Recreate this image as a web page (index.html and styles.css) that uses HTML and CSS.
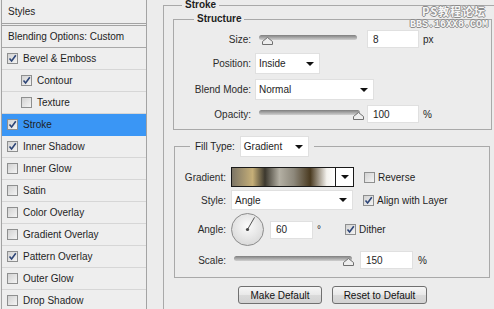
FILE: index.html
```html
<!DOCTYPE html>
<html lang="en">
<head>
    <meta charset="UTF-8">
    <meta name="viewport" content="width=device-width, initial-scale=1.0">
    <title>Layer Style - Stroke</title>
    <link rel="stylesheet" href="styles.css">
</head>
<body>
    <div class="dialog">
        <aside class="styles-panel">
            <div class="panel-head">Styles</div>
            <div class="panel-row">Blending Options: Custom</div>
            <div class="style-item"><span class="check on"><svg viewBox="0 0 9 9"><path d="M1.5 4.5 L3.6 7 L7.8 1.2"/></svg></span>Bevel &amp; Emboss</div>
            <div class="style-item sub"><span class="check on"><svg viewBox="0 0 9 9"><path d="M1.5 4.5 L3.6 7 L7.8 1.2"/></svg></span>Contour</div>
            <div class="style-item sub"><span class="check"></span>Texture</div>
            <div class="style-item selected"><span class="check on"><svg viewBox="0 0 9 9"><path d="M1.5 4.5 L3.6 7 L7.8 1.2"/></svg></span>Stroke</div>
            <div class="style-item"><span class="check on"><svg viewBox="0 0 9 9"><path d="M1.5 4.5 L3.6 7 L7.8 1.2"/></svg></span>Inner Shadow</div>
            <div class="style-item"><span class="check"></span>Inner Glow</div>
            <div class="style-item"><span class="check"></span>Satin</div>
            <div class="style-item"><span class="check"></span>Color Overlay</div>
            <div class="style-item"><span class="check"></span>Gradient Overlay</div>
            <div class="style-item"><span class="check on"><svg viewBox="0 0 9 9"><path d="M1.5 4.5 L3.6 7 L7.8 1.2"/></svg></span>Pattern Overlay</div>
            <div class="style-item"><span class="check"></span>Outer Glow</div>
            <div class="style-item"><span class="check"></span>Drop Shadow</div>
        </aside>

        <fieldset class="stroke-group">
            <legend class="group-title">Stroke</legend>

            <fieldset class="structure">
                <legend class="sub-title">Structure</legend>

                <div class="field-row short">
                    <span class="field-label">Size:</span>
                    <div class="slider size-slider">
                        <div class="track"></div>
                        <svg class="thumb" style="left: 3px" viewBox="0 0 11 8"><path d="M5.5 0.5 L10.5 4.5 L10.5 7.5 L0.5 7.5 L0.5 4.5 Z"/></svg>
                    </div>
                    <span class="num-input size-input">8</span>
                    <span class="unit">px</span>
                </div>

                <div class="field-row">
                    <span class="field-label">Position:</span>
                    <div class="select position-select">Inside<span class="caret"></span></div>
                </div>

                <div class="field-row">
                    <span class="field-label">Blend Mode:</span>
                    <div class="select blend-select">Normal<span class="caret"></span></div>
                </div>

                <div class="field-row short">
                    <span class="field-label">Opacity:</span>
                    <div class="slider opacity-slider">
                        <div class="track"></div>
                        <svg class="thumb" style="left: 94px" viewBox="0 0 11 8"><path d="M5.5 0.5 L10.5 4.5 L10.5 7.5 L0.5 7.5 L0.5 4.5 Z"/></svg>
                    </div>
                    <span class="num-input opacity-input">100</span>
                    <span class="unit">%</span>
                </div>
            </fieldset>

            <fieldset class="fill">
                <legend class="fill-legend">
                    <span>Fill Type:</span>
                    <div class="select fill-select">Gradient<span class="caret"></span></div>
                </legend>

                <div class="fill-row gradient-row">
                    <span class="fill-label">Gradient:</span>
                    <div class="gradient-swatch">
                        <div class="gradient-fill"></div>
                        <div class="gradient-drop"><span class="caret"></span></div>
                    </div>
                    <span class="check"></span>
                    <span class="check-text">Reverse</span>
                </div>

                <div class="fill-row style-row">
                    <span class="fill-label">Style:</span>
                    <div class="select style-select">Angle<span class="caret"></span></div>
                    <span class="check on"><svg viewBox="0 0 9 9"><path d="M1.5 4.5 L3.6 7 L7.8 1.2"/></svg></span>
                    <span class="check-text">Align with Layer</span>
                </div>

                <div class="fill-row angle-row">
                    <span class="fill-label">Angle:</span>
                    <svg class="dial" viewBox="0 0 33 33">
                        <defs>
                            <radialGradient id="dialFace" cx="50%" cy="40%" r="60%">
                                <stop offset="0%" stop-color="#fbfbfb"/>
                                <stop offset="100%" stop-color="#d9d9d9"/>
                            </radialGradient>
                        </defs>
                        <circle cx="16.5" cy="16.5" r="16" fill="url(#dialFace)" stroke="#8c8c8c"/>
                        <line x1="16.5" y1="16.5" x2="23.5" y2="4.4" stroke="#555" stroke-width="1"/>
                        <circle cx="16.5" cy="16.5" r="1.6" fill="#444"/>
                    </svg>
                    <span class="num-input angle-input">60</span>
                    <span class="unit">°</span>
                    <span class="check on dither-check"><svg viewBox="0 0 9 9"><path d="M1.5 4.5 L3.6 7 L7.8 1.2"/></svg></span>
                    <span class="check-text">Dither</span>
                </div>

                <div class="fill-row scale-row">
                    <span class="fill-label">Scale:</span>
                    <div class="slider scale-slider">
                        <div class="track"></div>
                        <svg class="thumb" style="left: 109px" viewBox="0 0 11 8"><path d="M5.5 0.5 L10.5 4.5 L10.5 7.5 L0.5 7.5 L0.5 4.5 Z"/></svg>
                    </div>
                    <span class="num-input scale-input">150</span>
                    <span class="unit">%</span>
                </div>
            </fieldset>

            <div class="buttons">
                <button class="make-default">Make Default</button>
                <button class="reset-default">Reset to Default</button>
            </div>
        </fieldset>
    </div>

    <div class="watermark">
        <div class="wm-cn">PS教程论坛</div>
        <div class="wm-en">BBS.16XX8.COM</div>
    </div>
</body>
</html>
```

FILE: styles.css
```css
* {
    margin: 0;
    padding: 0;
    box-sizing: border-box;
}

body {
    width: 494px;
    height: 309px;
    overflow: hidden;
    font-family: "Liberation Sans", Arial, sans-serif;
    font-size: 10px;
    color: #1e1e1e;
    background-color: #ececec;
}

.dialog {
    display: flex;
    align-items: flex-start;
}

/* left list */

.styles-panel {
    flex: none;
    width: 146px;
    height: 309px;
    margin-left: 1px;
    border-left: 1px solid #a3a3a3;
    border-right: 1px solid #a3a3a3;
    background-color: #eeeeee;
}

.panel-head {
    height: 26px;
    line-height: 23px;
    padding-left: 6px;
    border-bottom: 3px double #a3a3a3;
}

.panel-row {
    height: 22px;
    line-height: 21px;
    padding-left: 6px;
    border-bottom: 1px solid #a8a8a8;
}

.style-item {
    display: flex;
    align-items: center;
    gap: 5px;
    height: 22px;
    padding-left: 5px;
    border-bottom: 1px solid #d6d6d6;
}

.style-item.sub {
    padding-left: 19px;
}

.style-item.selected {
    background-color: #3a96f5;
    border-bottom-color: #3a96f5;
}

.check {
    flex: none;
    display: flex;
    align-items: center;
    justify-content: center;
    width: 11px;
    height: 11px;
    border: 1px solid #8e8f8f;
    background: linear-gradient(135deg, #d2d2d2, #f4f4f4);
}

.check svg {
    width: 9px;
    height: 9px;
}

.check path {
    fill: none;
    stroke: #2d4577;
    stroke-width: 1.6;
}

.check-text {
    margin-left: 3px;
}

/* right side */

.stroke-group {
    flex: none;
    width: 345px;
    margin-left: 16px;
    padding: 4px 0 12px 9px;
    border: 1px solid #a9a9a9;
}

.group-title,
.sub-title {
    font-weight: bold;
    line-height: 10px;
    padding: 0 3px;
}

.group-title {
    margin-left: 9px;
}

.sub-title {
    margin-left: 20px;
}

.structure {
    display: flex;
    flex-direction: column;
    gap: 5px;
    width: 319px;
    padding: 6px 0 6px 0;
    border: 1px solid #a9a9a9;
}

.field-row {
    display: flex;
    align-items: center;
    height: 21px;
}

.field-row.short {
    height: 18px;
}

.field-label {
    width: 77px;
    margin-right: 4px;
    text-align: right;
    color: #2b2b2b;
}

.slider {
    position: relative;
    height: 10px;
    margin-left: 4px;
}

.track {
    height: 5px;
    margin-top: 1px;
    border-radius: 3px;
    background: linear-gradient(#7e7e7e, #d0d0d0);
}

.thumb {
    position: absolute;
    top: 3px;
    width: 11px;
    height: 8px;
}

.thumb path {
    fill: #eeeeee;
    stroke: #707070;
}

.size-slider {
    width: 98px;
}

.opacity-slider {
    width: 101px;
}

.num-input {
    display: flex;
    align-items: center;
    height: 18px;
    padding-left: 5px;
    background-color: #fff;
    border: 1px solid #e0e0e0;
}

.size-input {
    width: 52px;
    margin-left: 10px;
}

.opacity-input {
    width: 52px;
    margin-left: 7px;
}

.unit {
    margin-left: 4px;
}

.select {
    display: flex;
    align-items: center;
    justify-content: space-between;
    height: 21px;
    padding: 0 5px 0 3px;
    background-color: #fff;
    border: 1px solid #e0e0e0;
}

.caret {
    width: 0;
    height: 0;
    border-left: 4px solid transparent;
    border-right: 4px solid transparent;
    border-top: 4px solid #111;
}

.position-select {
    width: 65px;
}

.blend-select {
    width: 119px;
}

/* fill type box */

.fill {
    display: flex;
    flex-direction: column;
    gap: 3px;
    width: 316px;
    margin: 6px 0 0 1px;
    padding: 10px 0 8px 0;
    border: 1px solid #a9a9a9;
}

.fill-legend {
    display: flex;
    align-items: center;
    gap: 5px;
    margin-left: 15px;
    padding: 0 5px;
}

.fill-select {
    width: 69px;
}

.fill-row {
    display: flex;
    align-items: center;
    height: 20px;
}

.fill-label {
    width: 51px;
    margin-right: 5px;
    text-align: right;
    color: #2b2b2b;
}

.gradient-swatch {
    display: flex;
    width: 123px;
    height: 20px;
    margin-right: 10px;
    border: 1px solid #1a1a1a;
}

.gradient-fill {
    flex: 1;
    background: linear-gradient(90deg, #7c7566 0%, #c6af78 20%, #3c382e 32%, #b4b0a4 46%, #8d887b 60%, #4a3a20 76%, #f4f2ee 92%, #ffffff 100%);
}

.gradient-drop {
    display: flex;
    align-items: center;
    justify-content: center;
    width: 18px;
    border-left: 1px solid #1a1a1a;
    background-color: #fff;
}

.style-select {
    width: 122px;
    height: 20px;
    margin-right: 10px;
}

.angle-row {
    height: 33px;
}

.dial {
    width: 33px;
    height: 33px;
}

.angle-input {
    width: 43px;
    margin-left: 6px;
}

.dither-check {
    margin-left: 24px;
}

.scale-row {
    height: 18px;
    margin-top: 2px;
}

.scale-slider {
    width: 118px;
    margin-left: 3px;
}

.scale-input {
    width: 53px;
    margin-left: 8px;
}

.scale-row .unit {
    margin-left: 5px;
}

/* buttons */

.buttons {
    display: flex;
    gap: 10px;
    margin: 8px 0 0 65px;
}

button {
    height: 18px;
    font-family: "Liberation Sans", Arial, sans-serif;
    font-size: 10px;
    color: #111;
    border: 1px solid #707070;
    border-radius: 3px;
    background: linear-gradient(#f6f6f6, #e8e8e8 50%, #dadada 51%, #d2d2d2);
}

.make-default {
    width: 84px;
}

.reset-default {
    width: 95px;
}

/* watermark over the top corner */

.watermark {
    position: absolute;
    top: 4px;
    left: 409px;
    width: 80px;
    text-align: center;
    color: #f6f6f6;
    font-weight: bold;
    text-shadow: 1px 0 #8c8c8c, -1px 0 #8c8c8c, 0 1px #8c8c8c, 0 -1px #8c8c8c;
}

.wm-cn {
    padding-left: 10px;
    font-family: "Noto Sans CJK SC", sans-serif;
    font-size: 11px;
    line-height: 14px;
    letter-spacing: 1px;
}

.wm-en {
    margin-top: 2px;
    font-family: "Liberation Mono", monospace;
    font-size: 10px;
    line-height: 9px;
}
```
